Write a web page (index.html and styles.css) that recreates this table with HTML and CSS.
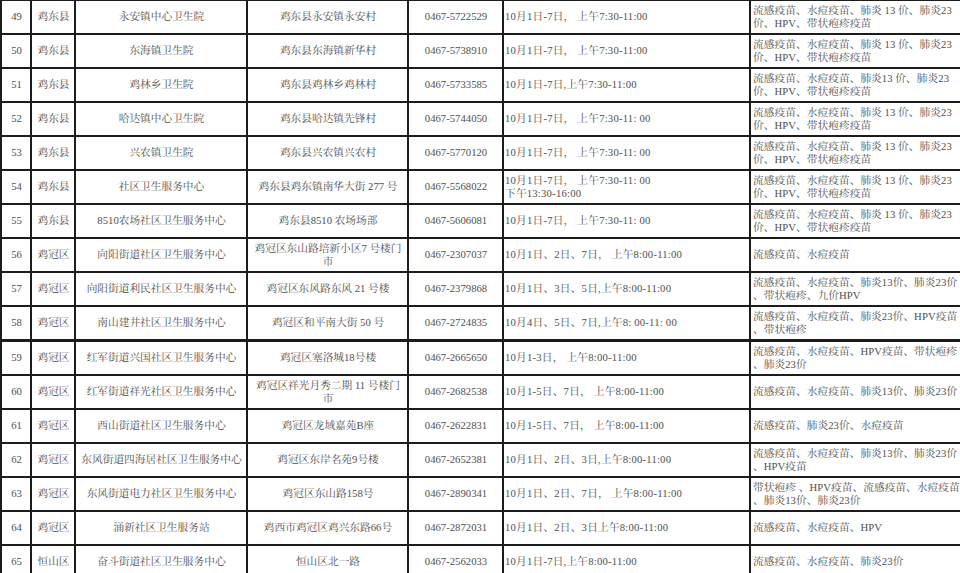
FILE: index.html
```html
<!DOCTYPE html>
<html lang="zh-CN">
<head>
<meta charset="utf-8">
<title>接种点一览</title>
<link rel="stylesheet" href="styles.css">
</head>
<body>
<table class="sheet">
<colgroup>
<col class="c-no"><col class="c-area"><col class="c-site"><col class="c-addr"><col class="c-tel"><col class="c-time"><col class="c-vac">
</colgroup>
<tbody>
<tr><td class="no">49</td><td class="area">鸡东县</td><td class="site">永安镇中心卫生院</td><td class="addr">鸡东县永安镇永安村</td><td class="tel">0467-5722529</td><td class="time">10月1日-7日，&nbsp;上午7:30-11:00</td><td class="vac">流感疫苗、水痘疫苗、肺炎 13 价、肺炎23<br>价、HPV、带状疱疹疫苗</td></tr>
<tr><td class="no">50</td><td class="area">鸡东县</td><td class="site">东海镇卫生院</td><td class="addr">鸡东县东海镇新华村</td><td class="tel">0467-5738910</td><td class="time">10月1日-7日，&nbsp;上午7:30-11:00</td><td class="vac">流感疫苗、水痘疫苗、肺炎 13 价、肺炎23<br>价、HPV、带状疱疹疫苗</td></tr>
<tr><td class="no">51</td><td class="area">鸡东县</td><td class="site">鸡林乡卫生院</td><td class="addr">鸡东县鸡林乡鸡林村</td><td class="tel">0467-5733585</td><td class="time">10月1日-7日,上午7:30-11:00</td><td class="vac">流感疫苗、水痘疫苗、肺炎13 价、肺炎23<br>价、HPV、带状疱疹疫苗</td></tr>
<tr><td class="no">52</td><td class="area">鸡东县</td><td class="site">哈达镇中心卫生院</td><td class="addr">鸡东县哈达镇先锋村</td><td class="tel">0467-5744050</td><td class="time">10月1日-7日，&nbsp;上午7:30-11: 00</td><td class="vac">流感疫苗、水痘疫苗、肺炎 13 价、肺炎23<br>价、HPV、带状疱疹疫苗</td></tr>
<tr><td class="no">53</td><td class="area">鸡东县</td><td class="site">兴农镇卫生院</td><td class="addr">鸡东县兴农镇兴农村</td><td class="tel">0467-5770120</td><td class="time">10月1日-7日，&nbsp;上午7:30-11: 00</td><td class="vac">流感疫苗、水痘疫苗、肺炎 13 价、肺炎23<br>价、HPV、带状疱疹疫苗</td></tr>
<tr><td class="no">54</td><td class="area">鸡东县</td><td class="site">社区卫生服务中心</td><td class="addr">鸡东县鸡东镇南华大街 277 号</td><td class="tel">0467-5568022</td><td class="time">10月1日-7日，&nbsp;上午7:30-11: 00<br>下午13:30-16:00</td><td class="vac">流感疫苗、水痘疫苗、肺炎 13 价、肺炎23<br>价、HPV、带状疱疹疫苗</td></tr>
<tr><td class="no">55</td><td class="area">鸡东县</td><td class="site">8510农场社区卫生服务中心</td><td class="addr">鸡东县8510 农场场部</td><td class="tel">0467-5606081</td><td class="time">10月1日-7日，&nbsp;上午7:30-11: 00</td><td class="vac">流感疫苗、水痘疫苗、肺炎 13 价、肺炎23<br>价、HPV、带状疱疹疫苗</td></tr>
<tr><td class="no">56</td><td class="area">鸡冠区</td><td class="site">向阳街道社区卫生服务中心</td><td class="addr">鸡冠区东山路培新小区7 号楼门<br>市</td><td class="tel">0467-2307037</td><td class="time">10月1日、2日、7日，&nbsp;上午8:00-11:00</td><td class="vac">流感疫苗、水痘疫苗</td></tr>
<tr><td class="no">57</td><td class="area">鸡冠区</td><td class="site">向阳街道利民社区卫生服务中心</td><td class="addr">鸡冠区东风路东风 21 号楼</td><td class="tel">0467-2379868</td><td class="time">10月1日、3日、5日,上午8:00-11:00</td><td class="vac">流感疫苗、水痘疫苗、肺炎13价、肺炎23价<br>、带状疱疹、九价HPV</td></tr>
<tr class="thick"><td class="no">58</td><td class="area">鸡冠区</td><td class="site">南山建井社区卫生服务中心</td><td class="addr">鸡冠区和平南大街 50 号</td><td class="tel">0467-2724835</td><td class="time">10月4日、5日、7日,上午8: 00-11: 00</td><td class="vac">流感疫苗、水痘疫苗、肺炎23价、HPV疫苗<br>、带状疱疹</td></tr>
<tr><td class="no">59</td><td class="area">鸡冠区</td><td class="site">红军街道兴国社区卫生服务中心</td><td class="addr">鸡冠区塞洛城18号楼</td><td class="tel">0467-2665650</td><td class="time">10月1-3日，&nbsp;上午8:00-11:00</td><td class="vac">流感疫苗、水痘疫苗、HPV疫苗、带状疱疹<br>、肺炎23价</td></tr>
<tr><td class="no">60</td><td class="area">鸡冠区</td><td class="site">红军街道祥光社区卫生服务中心</td><td class="addr">鸡冠区祥光月秀二期 11 号楼门<br>市</td><td class="tel">0467-2682538</td><td class="time">10月1-5日、7日，&nbsp;上午8:00-11:00</td><td class="vac">流感疫苗、水痘疫苗、肺炎13价、肺炎23价</td></tr>
<tr><td class="no">61</td><td class="area">鸡冠区</td><td class="site">西山街道社区卫生服务中心</td><td class="addr">鸡冠区龙域嘉苑B座</td><td class="tel">0467-2622831</td><td class="time">10月1-5日、7日，&nbsp;上午8:00-11:00</td><td class="vac">流感疫苗、肺炎23价、水痘疫苗</td></tr>
<tr><td class="no">62</td><td class="area">鸡冠区</td><td class="site">东风街道四海居社区卫生服务中心</td><td class="addr">鸡冠区东岸名苑9号楼</td><td class="tel">0467-2652381</td><td class="time">10月1日、2日、3日,上午8:00-11:00</td><td class="vac">流感疫苗、水痘疫苗、肺炎13价、肺炎23价<br>、HPV疫苗</td></tr>
<tr><td class="no">63</td><td class="area">鸡冠区</td><td class="site">东风街道电力社区卫生服务中心</td><td class="addr">鸡冠区东山路158号</td><td class="tel">0467-2890341</td><td class="time">10月1日、2日、7日，&nbsp;上午8:00-11:00</td><td class="vac">带状疱疹&nbsp;、HPV疫苗、流感疫苗、水痘疫苗<br>、肺炎13价、肺炎23价</td></tr>
<tr><td class="no">64</td><td class="area">鸡冠区</td><td class="site">涌新社区卫生服务站</td><td class="addr">鸡西市鸡冠区鸡兴东路66号</td><td class="tel">0467-2872031</td><td class="time">10月1日、2日、3日上午8:00-11:00</td><td class="vac">流感疫苗、水痘疫苗、HPV</td></tr>
<tr><td class="no">65</td><td class="area">恒山区</td><td class="site">奋斗街道社区卫生服务中心</td><td class="addr">恒山区北一路</td><td class="tel">0467-2562033</td><td class="time">10月1日-7日,上午8:00-11:00</td><td class="vac">流感疫苗、水痘疫苗、肺炎23价</td></tr>
</tbody>
</table>
</body>
</html>
```
FILE: styles.css
```css
html, body {
  margin: 0;
  padding: 0;
  background: #ffffff;
  overflow: hidden;
}

body {
  width: 960px;
  height: 573px;
  font-family: "Liberation Serif", "Noto Serif CJK SC", "Noto Sans CJK SC", serif;
  font-size: 10.7px;
  line-height: 13.5px;
  color: #505050;
}

.sheet {
  border-collapse: collapse;
  table-layout: fixed;
  width: 964px;
  margin-top: -1px;
}

.c-no { width: 30px; }
.c-area { width: 44px; }
.c-site { width: 172px; }
.c-addr { width: 161px; }
.c-tel { width: 95px; }
.c-time { width: 247px; }
.c-vac { width: 215px; }

.sheet td {
  border: 2px solid #1c1c1c;
  height: 32px;
  padding: 0 1px 0 2px;
  vertical-align: middle;
  white-space: nowrap;
  overflow: hidden;
}

.sheet .no,
.sheet .area,
.sheet .site,
.sheet .addr,
.sheet .tel {
  text-align: center;
}

.sheet .time,
.sheet .vac {
  text-align: left;
}

.sheet .time {
  letter-spacing: 0.2px;
  padding-left: 1px;
}

.sheet .vac {
  letter-spacing: 0.05px;
}

.sheet tr.thick td {
  border-bottom-width: 3px;
}
```
